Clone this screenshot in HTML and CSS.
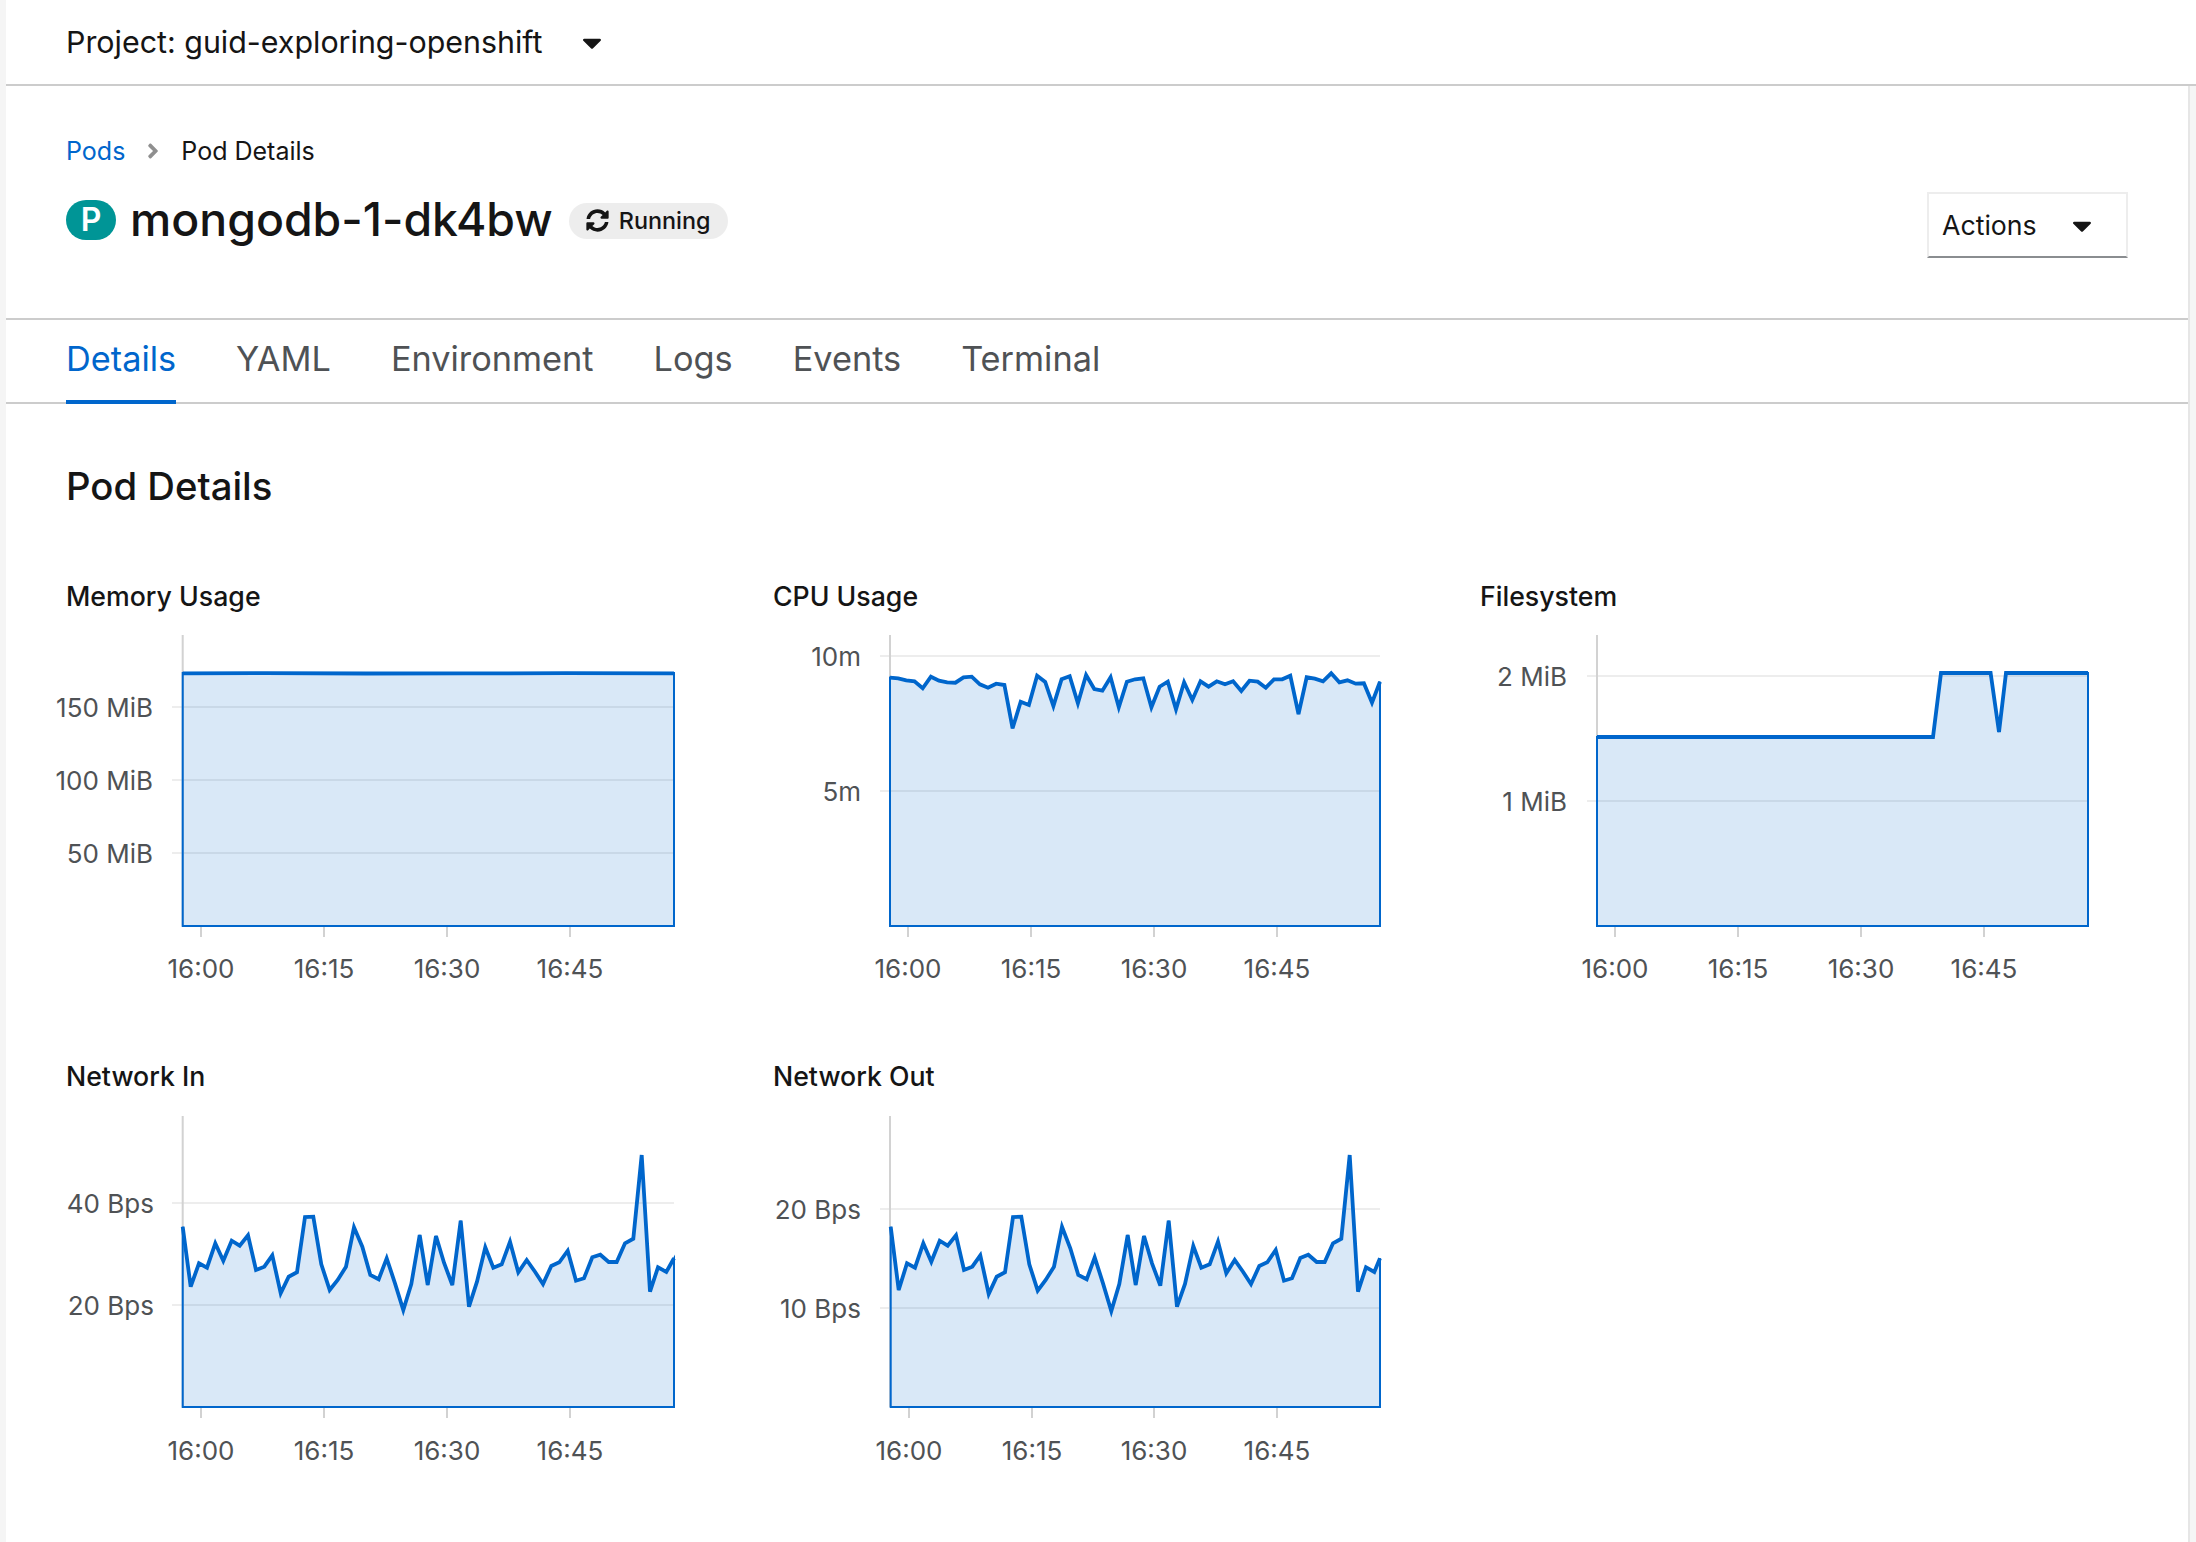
FILE: index.html
```html
<!DOCTYPE html>
<html lang="en">
<head>
<meta charset="UTF-8">
<meta name="viewport" content="width=device-width, initial-scale=1.0">
<title>Pod Details</title>
<link rel="stylesheet" href="styles.css">
</head>
<body>
  <header class="project-bar">
    <span class="project-name">Project: guid-exploring-openshift</span>
    <svg class="caret" viewBox="0 0 320 512"><path d="M31.3 192h257.3c17.8 0 26.7 21.5 14.1 34.1L174.1 354.8c-7.8 7.8-20.5 7.8-28.3 0L17.2 226.1C4.6 213.5 13.5 192 31.3 192z"/></svg>
  </header>

  <div class="page">
    <div class="page-head">
      <div>
        <nav class="breadcrumb">
          <a href="#" class="crumb-link">Pods</a>
          <svg class="crumb-sep" viewBox="0 0 256 512"><path d="M224.3 273l-136 136c-9.4 9.4-24.6 9.4-33.9 0l-22.6-22.6c-9.4-9.4-9.4-24.6 0-33.9l96.4-96.4-96.4-96.4c-9.4-9.4-9.4-24.6 0-33.9L54.3 103c9.4-9.4 24.6-9.4 33.9 0l136 136c9.5 9.4 9.5 24.6.1 34z"/></svg>
          <span>Pod Details</span>
        </nav>
        <div class="title-row">
          <span class="pod-badge">P</span>
          <h1 class="pod-name">mongodb-1-dk4bw</h1>
          <span class="status">
            <svg class="status-icon" viewBox="0 0 512 512"><path d="M370.72 133.28C339.458 104.008 298.888 87.962 255.848 88c-77.458.068-144.328 53.178-162.791 126.85-1.344 5.363-6.122 9.15-11.651 9.15H24.103c-7.498 0-13.194-6.807-11.807-14.176C33.933 94.924 134.813 8 256 8c66.448 0 126.791 26.136 171.315 68.685L463.03 40.97C478.149 25.851 504 36.559 504 57.941V192c0 13.255-10.745 24-24 24H345.941c-21.382 0-32.09-25.851-16.971-40.971l41.75-41.749zM32 296h134.059c21.382 0 32.09 25.851 16.971 40.971l-41.75 41.75c31.262 29.273 71.835 45.319 114.876 45.28 77.418-.07 144.315-53.144 162.787-126.849 1.344-5.363 6.122-9.15 11.651-9.15h57.304c7.498 0 13.194 6.807 11.807 14.176C478.067 417.076 377.187 504 256 504c-66.448 0-126.791-26.136-171.315-68.685L48.97 471.03C33.851 486.149 8 475.441 8 454.059V320c0-13.255 10.745-24 24-24z"/></svg>
            Running
          </span>
        </div>
      </div>
      <button class="actions">
        Actions
        <svg class="caret" viewBox="0 0 320 512"><path d="M31.3 192h257.3c17.8 0 26.7 21.5 14.1 34.1L174.1 354.8c-7.8 7.8-20.5 7.8-28.3 0L17.2 226.1C4.6 213.5 13.5 192 31.3 192z"/></svg>
      </button>
    </div>

    <nav class="tabs">
      <a href="#" class="tab active">Details</a>
      <a href="#" class="tab">YAML</a>
      <a href="#" class="tab">Environment</a>
      <a href="#" class="tab">Logs</a>
      <a href="#" class="tab">Events</a>
      <a href="#" class="tab">Terminal</a>
    </nav>

    <section class="details">
      <h2 class="section-title">Pod Details</h2>
      <div class="charts">

        <div class="chart">
          <h3 class="chart-title">Memory Usage</h3>
          <svg class="plot" viewBox="0 0 640 350">
            <g class="grid">
              <line x1="106" y1="72" x2="608" y2="72"/>
              <line x1="106" y1="145" x2="608" y2="145"/>
              <line x1="106" y1="218" x2="608" y2="218"/>
            </g>
            <g class="axis">
              <line x1="116.7" y1="0" x2="116.7" y2="291"/>
              <line x1="135" y1="291" x2="135" y2="302"/>
              <line x1="258" y1="291" x2="258" y2="302"/>
              <line x1="381" y1="291" x2="381" y2="302"/>
              <line x1="504" y1="291" x2="504" y2="302"/>
            </g>
            <polygon class="area" points="116.7,38 608,38 608,291 116.7,291"/>
            <polyline class="line" points="116.7,38.3 200,38.1 300,38.5 400,38.4 500,38.2 608,38.3"/>
            <g class="y-labels">
              <text x="87" y="82">150 MiB</text>
              <text x="87" y="155">100 MiB</text>
              <text x="87" y="228">50 MiB</text>
            </g>
            <g class="x-labels">
              <text x="135" y="343">16:00</text>
              <text x="258" y="343">16:15</text>
              <text x="381" y="343">16:30</text>
              <text x="504" y="343">16:45</text>
            </g>
          </svg>
        </div>

        <div class="chart">
          <h3 class="chart-title">CPU Usage</h3>
          <svg class="plot" viewBox="0 0 640 350">
            <g class="grid">
              <line x1="107" y1="21" x2="607" y2="21"/>
              <line x1="107" y1="156" x2="607" y2="156"/>
            </g>
            <g class="axis">
              <line x1="117" y1="0" x2="117" y2="291"/>
              <line x1="135" y1="291" x2="135" y2="302"/>
              <line x1="258" y1="291" x2="258" y2="302"/>
              <line x1="381" y1="291" x2="381" y2="302"/>
              <line x1="504" y1="291" x2="504" y2="302"/>
            </g>
            <polygon class="area" points="117,42.7 125.2,43.3 133.3,45.3 141.5,46.3 149.7,53.3 157.9,41.7 166,45.7 174.2,47.3 182.4,47.7 190.5,42.3 198.7,41.7 206.9,49.3 215,52.7 223.2,48.7 231.4,50 239.6,93.3 247.7,66.7 255.9,70 264.1,40.7 272.2,47 280.4,71 288.6,44.3 296.7,41.3 304.9,68.3 313.1,40 321.3,54 329.4,55.7 337.6,42.3 345.8,72.3 353.9,46.7 362.1,44.3 370.3,43.3 378.4,72.3 386.6,51.7 394.8,46.7 403,74.3 411.1,47.3 419.3,65 427.5,46.3 435.6,51.7 443.8,46.3 452,49.3 460.1,46.3 468.3,56 476.5,45.7 484.7,46.7 492.8,52.7 501,44.3 509.2,44.3 517.3,40.7 525.5,79 533.7,42.3 541.8,43.7 550,46.3 558.2,38.3 566.4,47.3 574.5,45.3 582.7,48.7 590.9,48.3 599,67.7 607,46.7 607,291 117,291"/>
            <polyline class="line" points="117,42.7 125.2,43.3 133.3,45.3 141.5,46.3 149.7,53.3 157.9,41.7 166,45.7 174.2,47.3 182.4,47.7 190.5,42.3 198.7,41.7 206.9,49.3 215,52.7 223.2,48.7 231.4,50 239.6,93.3 247.7,66.7 255.9,70 264.1,40.7 272.2,47 280.4,71 288.6,44.3 296.7,41.3 304.9,68.3 313.1,40 321.3,54 329.4,55.7 337.6,42.3 345.8,72.3 353.9,46.7 362.1,44.3 370.3,43.3 378.4,72.3 386.6,51.7 394.8,46.7 403,74.3 411.1,47.3 419.3,65 427.5,46.3 435.6,51.7 443.8,46.3 452,49.3 460.1,46.3 468.3,56 476.5,45.7 484.7,46.7 492.8,52.7 501,44.3 509.2,44.3 517.3,40.7 525.5,79 533.7,42.3 541.8,43.7 550,46.3 558.2,38.3 566.4,47.3 574.5,45.3 582.7,48.7 590.9,48.3 599,67.7 607,46.7"/>
            <g class="y-labels">
              <text x="88" y="31">10m</text>
              <text x="88" y="166">5m</text>
            </g>
            <g class="x-labels">
              <text x="135" y="343">16:00</text>
              <text x="258" y="343">16:15</text>
              <text x="381" y="343">16:30</text>
              <text x="504" y="343">16:45</text>
            </g>
          </svg>
        </div>

        <div class="chart">
          <h3 class="chart-title">Filesystem</h3>
          <svg class="plot" viewBox="0 0 640 350">
            <g class="grid">
              <line x1="107" y1="41" x2="608" y2="41"/>
              <line x1="107" y1="166" x2="608" y2="166"/>
            </g>
            <g class="axis">
              <line x1="117" y1="0" x2="117" y2="291"/>
              <line x1="135" y1="291" x2="135" y2="302"/>
              <line x1="258" y1="291" x2="258" y2="302"/>
              <line x1="381" y1="291" x2="381" y2="302"/>
              <line x1="504" y1="291" x2="504" y2="302"/>
            </g>
            <polygon class="area" points="117,102 453,102 461,38 510.6,38 519,97 526,38 608,38 608,291 117,291"/>
            <polyline class="line" points="117,102 453,102 461,38 510.6,38 519,97 526,38 608,38"/>
            <g class="y-labels">
              <text x="87" y="51">2 MiB</text>
              <text x="87" y="176">1 MiB</text>
            </g>
            <g class="x-labels">
              <text x="135" y="343">16:00</text>
              <text x="258" y="343">16:15</text>
              <text x="381" y="343">16:30</text>
              <text x="504" y="343">16:45</text>
            </g>
          </svg>
        </div>

        <div class="chart chart-low">
          <h3 class="chart-title">Network In</h3>
          <svg class="plot" viewBox="0 0 640 350">
            <g class="grid">
              <line x1="106" y1="87" x2="608" y2="87"/>
              <line x1="106" y1="189" x2="608" y2="189"/>
            </g>
            <g class="axis">
              <line x1="116.7" y1="0" x2="116.7" y2="291"/>
              <line x1="135" y1="291" x2="135" y2="302"/>
              <line x1="258" y1="291" x2="258" y2="302"/>
              <line x1="381" y1="291" x2="381" y2="302"/>
              <line x1="504" y1="291" x2="504" y2="302"/>
            </g>
            <polygon class="area" points="116.7,110.7 124.7,170.7 133,147.3 141,151.7 149.3,127.3 157.3,144.7 165.7,124.7 173.7,129.7 182,119.3 190,154 198.3,150.7 206.3,139.3 214.7,177.3 222.7,160.7 231,156.3 239,101 247.3,100.7 255.3,148.3 263.7,174 271.7,164 280,150.7 288,111.3 296.3,130.7 304.3,159 312.7,163.3 320.7,142.3 329,167.3 337.3,194 345.3,168 353.7,119 361.7,169 370,120 378,146.7 386.3,169 394.7,104.7 403,190.7 411,165.7 419.3,131.3 427.3,151.7 435.7,148.3 444,125.7 452.3,156.3 460.7,144 469,155.7 477,168 485.3,150 493.3,146.3 501.7,134.7 510,164.7 518,162.3 526.3,141.3 534.3,138.7 542.7,146 550.7,146 559,127.3 567.3,122.7 575.7,39 584,175.7 592,151.3 600.3,156 608,142.3 608,291 116.7,291"/>
            <polyline class="line" points="116.7,110.7 124.7,170.7 133,147.3 141,151.7 149.3,127.3 157.3,144.7 165.7,124.7 173.7,129.7 182,119.3 190,154 198.3,150.7 206.3,139.3 214.7,177.3 222.7,160.7 231,156.3 239,101 247.3,100.7 255.3,148.3 263.7,174 271.7,164 280,150.7 288,111.3 296.3,130.7 304.3,159 312.7,163.3 320.7,142.3 329,167.3 337.3,194 345.3,168 353.7,119 361.7,169 370,120 378,146.7 386.3,169 394.7,104.7 403,190.7 411,165.7 419.3,131.3 427.3,151.7 435.7,148.3 444,125.7 452.3,156.3 460.7,144 469,155.7 477,168 485.3,150 493.3,146.3 501.7,134.7 510,164.7 518,162.3 526.3,141.3 534.3,138.7 542.7,146 550.7,146 559,127.3 567.3,122.7 575.7,39 584,175.7 592,151.3 600.3,156 608,142.3"/>
            <g class="y-labels">
              <text x="88" y="97">40 Bps</text>
              <text x="88" y="199">20 Bps</text>
            </g>
            <g class="x-labels">
              <text x="135" y="344">16:00</text>
              <text x="258" y="344">16:15</text>
              <text x="381" y="344">16:30</text>
              <text x="504" y="344">16:45</text>
            </g>
          </svg>
        </div>

        <div class="chart chart-low">
          <h3 class="chart-title">Network Out</h3>
          <svg class="plot" viewBox="0 0 640 350">
            <g class="grid">
              <line x1="107" y1="93" x2="607" y2="93"/>
              <line x1="107" y1="192" x2="607" y2="192"/>
            </g>
            <g class="axis">
              <line x1="117" y1="0" x2="117" y2="291"/>
              <line x1="136" y1="291" x2="136" y2="302"/>
              <line x1="259" y1="291" x2="259" y2="302"/>
              <line x1="381" y1="291" x2="381" y2="302"/>
              <line x1="504" y1="291" x2="504" y2="302"/>
            </g>
            <polygon class="area" points="117.7,110.7 125.7,174 134,147.3 142,151.7 150.3,127.3 158.3,145.7 166.7,124.7 174.7,129.7 183,119.3 191,154 199.3,150.7 207.3,139.3 215.7,178 223.7,160.7 232,156.3 240,101 248.3,100.7 256.3,148.3 264.7,174.7 272.7,164 281,150.7 289,110.7 297.3,132.3 305.3,159 313.7,163.3 321.7,141.3 330,167.3 338.3,195 346.3,168 354.7,119 362.7,169 371,120 379,147.3 387.3,169.7 395.7,104.7 404,190.7 412,168 420.3,130 428.3,151.7 436.7,148.3 445,125.7 453.3,157.3 461.7,144 470,155.7 478,168 486.3,150 494.3,146.3 502.7,134 511,164.7 519,162.3 527.3,142 535.3,138.7 543.7,146 551.7,146 560,127.3 568.3,122.7 576.7,39 585,175.7 593,151.3 601.3,156 607,142.3 607,291 117.7,291"/>
            <polyline class="line" points="117.7,110.7 125.7,174 134,147.3 142,151.7 150.3,127.3 158.3,145.7 166.7,124.7 174.7,129.7 183,119.3 191,154 199.3,150.7 207.3,139.3 215.7,178 223.7,160.7 232,156.3 240,101 248.3,100.7 256.3,148.3 264.7,174.7 272.7,164 281,150.7 289,110.7 297.3,132.3 305.3,159 313.7,163.3 321.7,141.3 330,167.3 338.3,195 346.3,168 354.7,119 362.7,169 371,120 379,147.3 387.3,169.7 395.7,104.7 404,190.7 412,168 420.3,130 428.3,151.7 436.7,148.3 445,125.7 453.3,157.3 461.7,144 470,155.7 478,168 486.3,150 494.3,146.3 502.7,134 511,164.7 519,162.3 527.3,142 535.3,138.7 543.7,146 551.7,146 560,127.3 568.3,122.7 576.7,39 585,175.7 593,151.3 601.3,156 607,142.3"/>
            <g class="y-labels">
              <text x="88" y="103">20 Bps</text>
              <text x="88" y="202">10 Bps</text>
            </g>
            <g class="x-labels">
              <text x="136" y="344">16:00</text>
              <text x="259" y="344">16:15</text>
              <text x="381" y="344">16:30</text>
              <text x="504" y="344">16:45</text>
            </g>
          </svg>
        </div>

      </div>
    </section>
  </div>
</body>
</html>
```

FILE: styles.css
```css
* {
  box-sizing: border-box;
}

body {
  margin: 0;
  min-height: 100vh;
  display: flex;
  flex-direction: column;
  padding-left: 6px;
  background-color: #f5f5f5;
  color: #151515;
  font-family: Inter, "Noto Sans", sans-serif;
}

/* Top bar with the project selector */
.project-bar {
  display: flex;
  align-items: center;
  height: 86px;
  padding-left: 60px;
  background-color: #fff;
  border-bottom: 2px solid #ccc;
}

.project-name {
  font-size: 30.4px;
}

.project-bar .caret {
  margin-left: 39px;
}

.caret {
  width: 20px;
  height: 31px;
  fill: #151515;
}

.page {
  flex: 1;
  margin-right: 6px;
  background-color: #fff;
  border-right: 2px solid #e6e6e6;
}

/* Breadcrumb, pod name and actions */
.page-head {
  display: flex;
  justify-content: space-between;
  align-items: flex-start;
  height: 232px;
  padding: 51px 60px 0 60px;
}

.breadcrumb {
  display: flex;
  align-items: center;
  height: 28px;
  font-size: 25px;
}

.crumb-link {
  color: #06c;
  text-decoration: none;
}

.crumb-sep {
  width: 12px;
  height: 24px;
  margin: 0 22px 0 22px;
  fill: #8f8f8f;
}

.title-row {
  display: flex;
  align-items: center;
  height: 60px;
  margin-top: 25px;
}

.pod-badge {
  width: 50px;
  height: 40px;
  border-radius: 20px;
  background-color: #009596;
  color: #fff;
  font-size: 32px;
  font-weight: 600;
  line-height: 40px;
  text-align: center;
}

.pod-name {
  margin: 0 0 3px 14px;
  font-size: 46.4px;
  font-weight: 500;
}

.status {
  display: flex;
  align-items: center;
  height: 36px;
  margin: 1px 0 0 16px;
  padding: 0 17px 0 17px;
  border-radius: 18px;
  background-color: #ededed;
  font-size: 23.4px;
  font-weight: 500;
}

.status-icon {
  width: 23px;
  height: 23px;
  margin-right: 10px;
  fill: #151515;
}

.actions {
  display: flex;
  align-items: center;
  justify-content: space-between;
  width: 201px;
  height: 66px;
  margin-top: 55px;
  padding: 0 34px 0 13px;
  background-color: #fff;
  border: 2px solid #ededed;
  border-bottom-color: #8a8d90;
  color: #151515;
  font-family: inherit;
  font-size: 26.7px;
}

/* Tabs */
.tabs {
  display: flex;
  gap: 60px;
  height: 86px;
  padding-left: 60px;
  border-top: 2px solid #ccc;
  border-bottom: 2px solid #ccc;
}

.tab {
  height: 84px;
  color: #4f5255;
  font-size: 34.3px;
  line-height: 78px;
  text-decoration: none;
}

.tab.active {
  color: #06c;
  border-bottom: 4px solid #06c;
}

/* Charts */
.details {
  padding: 57px 60px 0;
}

.section-title {
  margin: 0 0 68px;
  font-size: 38.3px;
  font-weight: 500;
  line-height: 50px;
}

.charts {
  display: grid;
  grid-template-columns: repeat(3, 707px);
  row-gap: 74px;
}

.chart-title {
  margin: 0 0 22px;
  font-size: 26.7px;
  font-weight: 500;
  line-height: 34px;
}

.chart-low .chart-title {
  margin-bottom: 23px;
}

.plot {
  display: block;
  width: 640px;
  height: 350px;
  overflow: visible;
}

.grid line {
  stroke: #ededed;
  stroke-width: 2;
}

.axis line {
  stroke: #d2d2d2;
  stroke-width: 2;
}

.area {
  fill: #06c;
  fill-opacity: 0.15;
  stroke: #06c;
  stroke-width: 2;
}

.line {
  fill: none;
  stroke: #06c;
  stroke-width: 3.8;
}

.y-labels text {
  fill: #4f5255;
  font-size: 26px;
  text-anchor: end;
}

.x-labels text {
  fill: #4f5255;
  font-size: 26px;
  text-anchor: middle;
}
```
